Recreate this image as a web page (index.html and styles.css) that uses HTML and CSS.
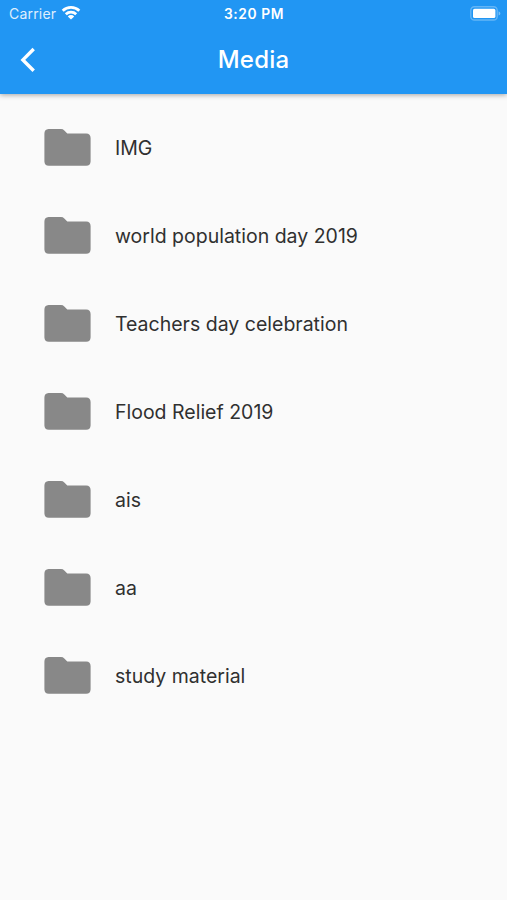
FILE: index.html
```html
<!DOCTYPE html>
<html lang="en">
<head>
    <meta charset="UTF-8">
    <meta name="viewport" content="width=device-width, initial-scale=1.0">
    <title>Media</title>
    <link rel="stylesheet" href="styles.css">
</head>
<body>
    <svg width="0" height="0" class="symbols">
        <symbol id="folder" viewBox="0 0 47 37">
            <path d="M4.6 0H17a4.6 4.6 0 0 1 3.3 1.4L23.3 4.5H42.2A4.6 4.6 0 0 1 46.6 9.1V32.4A4.6 4.6 0 0 1 42.2 36.8H4.8A4.6 4.6 0 0 1 .4 32.4V4.6A4.6 4.6 0 0 1 4.6 0Z"/>
        </symbol>
    </svg>

    <header class="app-header">
        <div class="status-bar">
            <div class="status-left">
                <span class="carrier">Carrier</span>
                <svg class="wifi" width="20" height="15" viewBox="0 0 20 15" fill="none" stroke="#fff" stroke-width="2.8">
                    <path d="M1.7 5.7a12 12 0 0 1 16.6 0"/>
                    <path d="M4.8 9.2a7.6 7.6 0 0 1 10.4 0"/>
                    <path d="M10 14.6 6.8 11.4a4.6 4.6 0 0 1 6.4 0Z" fill="#fff" stroke="none"/>
                </svg>
            </div>
            <span class="time">3:20 PM</span>
            <div class="status-right">
                <svg width="32" height="15" viewBox="0 0 32 15">
                    <rect x=".8" y=".8" width="26.4" height="13.2" rx="3.6" fill="none" stroke="#fff" stroke-opacity=".3" stroke-width="1.4"/>
                    <rect x="3" y="2.8" width="22.4" height="9.2" rx="1.6" fill="#fff"/>
                    <path d="M28.6 5.2v4.4q1.8-.7 1.8-2.2t-1.8-2.2Z" fill="#fff" fill-opacity=".4"/>
                </svg>
            </div>
        </div>
        <div class="nav-bar">
            <a href="#" class="back" aria-label="Back">
                <svg width="16" height="26" viewBox="0 0 16 26" fill="none" stroke="#fff" stroke-width="3.4">
                    <path d="M13.7 2 2.9 12.9 13.7 23.8"/>
                </svg>
            </a>
            <h1>Media</h1>
        </div>
    </header>

    <ul class="folder-list">
        <li class="folder"><svg class="folder-icon"><use href="#folder"/></svg><span>IMG</span></li>
        <li class="folder"><svg class="folder-icon"><use href="#folder"/></svg><span>world population day 2019</span></li>
        <li class="folder"><svg class="folder-icon"><use href="#folder"/></svg><span>Teachers day celebration</span></li>
        <li class="folder"><svg class="folder-icon"><use href="#folder"/></svg><span>Flood Relief 2019</span></li>
        <li class="folder"><svg class="folder-icon"><use href="#folder"/></svg><span>ais</span></li>
        <li class="folder"><svg class="folder-icon"><use href="#folder"/></svg><span>aa</span></li>
        <li class="folder"><svg class="folder-icon"><use href="#folder"/></svg><span>study material</span></li>
    </ul>
</body>
</html>
```

FILE: styles.css
```css
* {
    box-sizing: border-box;
}
body {
    margin: 0;
    min-height: 900px;
    background-color: #fafafa;
    color: #303030;
    font-family: Inter, Roboto, sans-serif;
}
.symbols {
    display: block;
}
.app-header {
    height: 94px;
    background-color: #2196f3;
    color: #fff;
    box-shadow: 0 1px 5px rgba(0, 0, 0, 0.35);
}
.status-bar {
    display: grid;
    grid-template-columns: 1fr auto 1fr;
    align-items: center;
    height: 27px;
    padding: 0 5px 0 9px;
}
.status-left {
    display: flex;
    align-items: center;
    gap: 5px;
}
.carrier {
    font-size: 14px;
    letter-spacing: 0.2px;
    opacity: 0.85;
}
.wifi {
    margin-top: -2px;
}
.time {
    margin-right: 3px;
    font-size: 13.8px;
    font-weight: 600;
    letter-spacing: 0.6px;
}
.status-right {
    display: flex;
    justify-content: flex-end;
}
.nav-bar {
    display: grid;
    grid-template-columns: 60px 1fr 60px;
    align-items: center;
    height: 65px;
}
.back {
    display: flex;
    padding-left: 20px;
}
h1 {
    margin: 0;
    font-size: 24px;
    font-weight: 500;
    letter-spacing: 0.2px;
    text-align: center;
}
.folder-list {
    margin: 0;
    padding: 10px 0 0 44px;
    list-style: none;
}
.folder {
    display: flex;
    align-items: center;
    gap: 24px;
    height: 88px;
    font-size: 19.5px;
}
.folder-icon {
    width: 47px;
    height: 37px;
    margin-bottom: 1px;
    fill: #888;
}
```
